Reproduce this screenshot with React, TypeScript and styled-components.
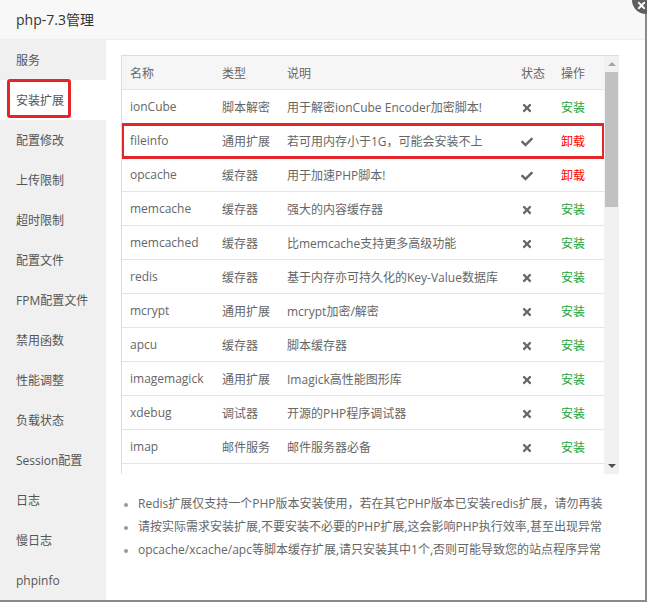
import React from "react";
import styled, { createGlobalStyle } from "styled-components";
import { FaTimes, FaCheck } from "react-icons/fa";

const GlobalStyle = createGlobalStyle`
  html, body {
    margin: 0;
    padding: 0;
    background: #8a8a8a;
    font-family: "Open Sans", "Noto Sans CJK SC", sans-serif;
  }
`;

interface Extension {
  name: string;
  type: string;
  desc: string;
  installed: boolean;
  marked?: boolean;
}

const menu = [
  "服务",
  "安装扩展",
  "配置修改",
  "上传限制",
  "超时限制",
  "配置文件",
  "FPM配置文件",
  "禁用函数",
  "性能调整",
  "负载状态",
  "Session配置",
  "日志",
  "慢日志",
  "phpinfo",
];

const extensions: Extension[] = [
  { name: "ionCube", type: "脚本解密", desc: "用于解密ionCube Encoder加密脚本!", installed: false },
  { name: "fileinfo", type: "通用扩展", desc: "若可用内存小于1G，可能会安装不上", installed: true, marked: true },
  { name: "opcache", type: "缓存器", desc: "用于加速PHP脚本!", installed: true },
  { name: "memcache", type: "缓存器", desc: "强大的内容缓存器", installed: false },
  { name: "memcached", type: "缓存器", desc: "比memcache支持更多高级功能", installed: false },
  { name: "redis", type: "缓存器", desc: "基于内存亦可持久化的Key-Value数据库", installed: false },
  { name: "mcrypt", type: "通用扩展", desc: "mcrypt加密/解密", installed: false },
  { name: "apcu", type: "缓存器", desc: "脚本缓存器", installed: false },
  { name: "imagemagick", type: "通用扩展", desc: "Imagick高性能图形库", installed: false },
  { name: "xdebug", type: "调试器", desc: "开源的PHP程序调试器", installed: false },
  { name: "imap", type: "邮件服务", desc: "邮件服务器必备", installed: false },
  { name: "exif", type: "通用扩展", desc: "用于读取图片EXIF信息", installed: false },
];

const notes = [
  "Redis扩展仅支持一个PHP版本安装使用，若在其它PHP版本已安装redis扩展，请勿再装",
  "请按实际需求安装扩展,不要安装不必要的PHP扩展,这会影响PHP执行效率,甚至出现异常",
  "opcache/xcache/apc等脚本缓存扩展,请只安装其中1个,否则可能导致您的站点程序异常",
];

export default function App() {
  return (
    <>
      <GlobalStyle />
      <Layer>
        <CloseButton>
          <FaTimes size={11} />
        </CloseButton>
        <TitleBar>php-7.3管理</TitleBar>
        <Body>
          <Sidebar>
            {menu.map((item, i) => (
              <MenuItem key={item} $active={i === 1}>
                {i === 1 ? <Marked>{item}</Marked> : item}
              </MenuItem>
            ))}
          </Sidebar>
          <Content>
            <TableBox>
              <TableScroll>
                <Table>
                  <colgroup>
                    <col style={{ width: 92 }} />
                    <col style={{ width: 65 }} />
                    <col style={{ width: 234 }} />
                    <col style={{ width: 40 }} />
                    <col />
                  </colgroup>
                  <thead>
                    <tr>
                      <Th>名称</Th>
                      <Th>类型</Th>
                      <Th>说明</Th>
                      <Th>状态</Th>
                      <Th>操作</Th>
                    </tr>
                  </thead>
                  <tbody>
                    {extensions.map((ext) => (
                      <Row key={ext.name} $marked={ext.marked}>
                        <Td>{ext.name}</Td>
                        <Td>{ext.type}</Td>
                        <Td>{ext.desc}</Td>
                        <Td>
                          <StatusIcon>
                            {ext.installed ? <FaCheck size={12} /> : <FaTimes size={12} />}
                          </StatusIcon>
                        </Td>
                        <Td>
                          <Action $danger={ext.installed}>
                            {ext.installed ? "卸载" : "安装"}
                          </Action>
                        </Td>
                      </Row>
                    ))}
                  </tbody>
                </Table>
              </TableScroll>
              <Scrollbar>
                <Arrow $up />
                <Track>
                  <Thumb />
                </Track>
                <Arrow />
              </Scrollbar>
            </TableBox>
            <Notes>
              {notes.map((n) => (
                <li key={n}>{n}</li>
              ))}
            </Notes>
          </Content>
        </Body>
      </Layer>
    </>
  );
}

const Layer = styled.div`
  position: relative;
  width: 645px;
  height: 600px;
  background: #fff;
  display: flex;
  flex-direction: column;
`;

const CloseButton = styled.div`
  position: absolute;
  left: 632px;
  top: -14px;
  width: 28px;
  height: 28px;
  border-radius: 50%;
  background: #5f5f5f;
  color: #fff;
  display: flex;
  align-items: flex-end;
  justify-content: flex-start;
  padding: 0 0 3px 4px;
  box-sizing: border-box;
  z-index: 2;
`;

const TitleBar = styled.div`
  height: 40px;
  line-height: 40px;
  padding-left: 16px;
  background: #f8f8f8;
  border-bottom: 1px solid #eee;
  box-sizing: border-box;
  font-size: 14px;
  color: #333;
`;

const Body = styled.div`
  flex: 1;
  display: flex;
  min-height: 0;
`;

const Sidebar = styled.div`
  width: 106px;
  background: #f0f0f0;
  display: flex;
  flex-direction: column;
`;

const MenuItem = styled.div<{ $active?: boolean }>`
  height: 40px;
  display: flex;
  align-items: center;
  padding-left: 16px;
  font-size: 12px;
  color: #555;
  background: ${({ $active }) => ($active ? "#fff" : "transparent")};
`;

const Marked = styled.span`
  position: relative;
  &::after {
    content: "";
    position: absolute;
    left: -9px;
    right: -7px;
    top: -12px;
    bottom: -9px;
    border: 3px solid #e3262a;
    border-radius: 3px;
  }
`;

const Content = styled.div`
  flex: 1;
  padding: 15px 26px 0 15px;
  display: flex;
  flex-direction: column;
`;

const TableBox = styled.div`
  height: 418px;
  display: flex;
  border-top: 1px solid #ddd;
  border-left: 1px solid #ddd;
`;

const TableScroll = styled.div`
  flex: 1;
  overflow: hidden;
`;

const Table = styled.table`
  width: 100%;
  border-collapse: collapse;
  table-layout: fixed;
  font-size: 12px;
  color: #666;
`;

const Th = styled.th`
  height: 33px;
  padding: 0 0 0 8px;
  text-align: left;
  font-weight: normal;
  background: #f6f6f6;
  border-bottom: 1px solid #e5e5e5;
  white-space: nowrap;
`;

const Row = styled.tr<{ $marked?: boolean }>`
  ${({ $marked }) =>
    $marked
      ? `
    outline: 3px solid #e3262a;
    outline-offset: -2px;
  `
      : ""}
`;

const Td = styled.td`
  height: 33px;
  padding: 0 0 0 8px;
  border-bottom: 1px solid #e5e5e5;
  white-space: nowrap;
  overflow: hidden;
`;

const StatusIcon = styled.span`
  display: inline-flex;
  color: #666;
  vertical-align: middle;
`;

const Action = styled.span<{ $danger?: boolean }>`
  color: ${({ $danger }) => ($danger ? "#f00" : "#20a53a")};
`;

const Scrollbar = styled.div`
  width: 15px;
  background: #f1f1f1;
  display: flex;
  flex-direction: column;
`;

const Arrow = styled.div<{ $up?: boolean }>`
  height: 16px;
  display: flex;
  align-items: center;
  justify-content: center;
  &::before {
    content: "";
    border-left: 4px solid transparent;
    border-right: 4px solid transparent;
    ${({ $up }) =>
      $up ? "border-bottom: 4px solid #a3a3a3;" : "border-top: 4px solid #505050;"}
  }
`;

const Track = styled.div`
  flex: 1;
  padding: 0 1px;
`;

const Thumb = styled.div`
  height: 135px;
  background: #c1c1c1;
`;

const Notes = styled.ul`
  margin: 18px 0 0;
  padding: 0 0 0 17px;
  font-size: 12px;
  color: #666;
  list-style: disc;
  li {
    line-height: 23px;
  }
  li::marker {
    color: #999;
    font-size: 10px;
  }
`;
